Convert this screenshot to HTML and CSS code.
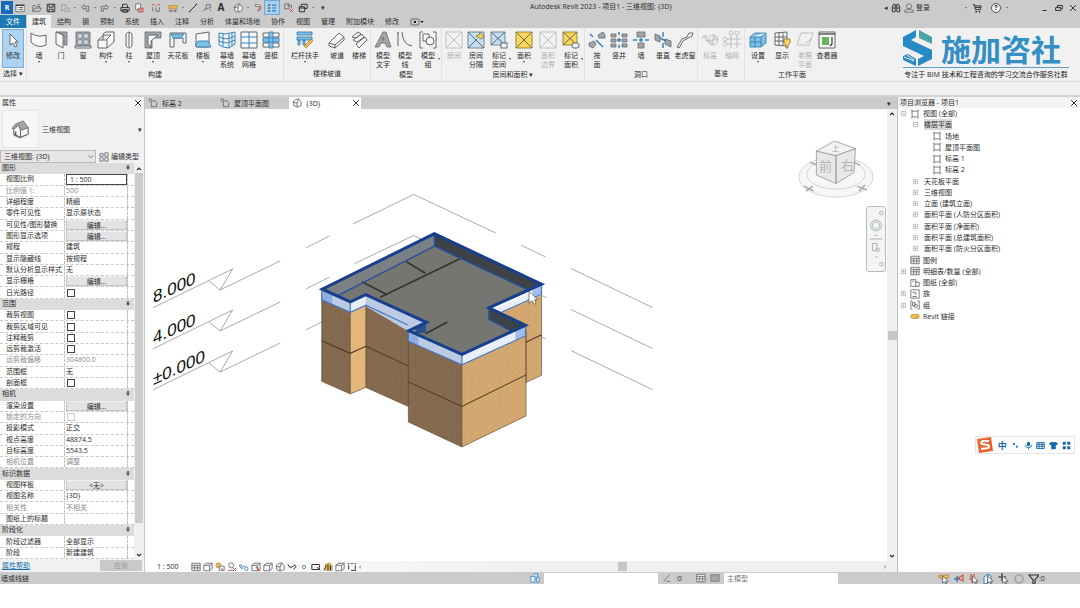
FILE: index.html
```html
<!DOCTYPE html>
<html lang="zh-CN">
<head>
<meta charset="utf-8">
<title>Autodesk Revit 2023 - 项目1</title>
<link rel="stylesheet" href="styles.css">
</head>
<body>
<svg class="defs" aria-hidden="true">
  <defs>
    <symbol id="i-page" viewBox="0 0 12 12"><path class="o" d="M1.500 4.500V1.500H5M4 3.500H8.500L10.500 5.500V10.500H4Z"/></symbol>
    <symbol id="i-house" viewBox="0 0 12 12"><path class="o w" d="M1 5L4 2L8 1L11 5V9L6 11L2 9V5M1 5L6 6L8 1M6 6V11"/></symbol>
    <symbol id="i-dim" viewBox="0 0 12 12"><path class="gold" d="M1 3H11V7H1Z"/><path class="o" d="M1 9.500H11M3 8V11M9 8V11"/></symbol>
    <symbol id="i-cube" viewBox="0 0 12 12"><path class="o w" d="M1 4L4 1.500H11V8L8 10.500H1ZM1 4H8L11 1.500M8 4V10.500"/></symbol>
    <symbol id="i-x" viewBox="0 0 12 12"><path class="k" d="M2.500 2.500L9.500 9.500M9.500 2.500L2.500 9.500"/></symbol>
    <symbol id="i-room" viewBox="0 0 18 18"><path class="o w" d="M1 1H17V17H1Z"/><path class="o" d="M1 1L17 17M17 1L1 17"/></symbol>
    <symbol id="i-area" viewBox="0 0 18 18"><path class="yel" d="M1 1H17V17H1Z"/><path class="o" d="M1 1L17 17M17 1L1 17"/></symbol>
    <symbol id="i-sheet" viewBox="0 0 12 12"><path class="o" d="M2.500 2.500H9.500V9.500H2.500ZM1 1.500H3M9 1.500H11M1 10.500H3M9 10.500H11"/></symbol>
    <symbol id="i-plus" viewBox="0 0 8 8"><path class="t" d="M1.500 1.500H6.500V6.500H1.500ZM2.500 4H5.500M4 2.500V5.500"/></symbol>
    <symbol id="i-minus" viewBox="0 0 8 8"><path class="t" d="M1.500 1.500H6.500V6.500H1.500ZM2.500 4H5.500"/></symbol>
    <symbol id="i-list" viewBox="0 0 12 12"><path class="o w" d="M1 1.500H11V10.500H1Z"/><path class="o" d="M1 4H11M1 7H11M4.500 4V10M8 4V10"/></symbol>
    <symbol id="i-cursor" viewBox="0 0 12 12"><path class="o w" d="M5 3V11L7 9.500L8.500 12L9.500 11.500L8.500 9H11Z"/></symbol>
  </defs>
</svg>
<div class="app">
  <header class="top">
    <div class="titlebar">
      <div class="qat">
        <button class="logo" aria-label="Revit">R</button>
        <button aria-label="主页"><svg viewBox="0 0 12 12"><path class="o w" d="M1 2H11V10.500H1Z"/><path class="k" d="M1 3H11M3 5.500H4M5.500 5.500H9M3 8H4M5.500 8H9"/></svg></button>
        <button class="gap" aria-label="打开"><svg viewBox="0 0 12 12"><path class="o" d="M1 10V3H4L5 4H9V6M1 10L3.500 6H11.500L9 10ZM7 2H10"/></svg></button>
        <button aria-label="保存"><svg viewBox="0 0 12 12"><path class="k" d="M1.500 1.500H10.500V10.500H1.500ZM3.500 1.500V5H8.500V1.500M3.500 10.500V7.500H8.500V10.500"/></svg></button>
        <button aria-label="同步"><svg class="dim" viewBox="0 0 12 12"><path class="o" d="M2 2H7V5M2 2V9H5M6 6H11V10.500H6Z"/></svg></button>
        <span class="dot">·</span>
        <button aria-label="放弃"><svg viewBox="0 0 12 12"><path class="o" d="M5 2L1.500 5L5 8V6.500H8V10H10.500V4H5Z"/></svg></button>
        <span class="dot">·</span>
        <button aria-label="重做"><svg viewBox="0 0 12 12"><path class="o" d="M7 2L10.500 5L7 8V6.500H4V10H1.500V4H7Z"/></svg></button>
        <span class="dot">·</span>
        <button aria-label="打印"><svg viewBox="0 0 12 12"><path class="k" d="M3 5V1.500H8L9 2.500V5M1 5.500H11V9.500H1ZM3 8H9V11H3Z"/></svg></button>
        <button aria-label="PDF"><svg viewBox="0 0 12 12"><path class="o w" d="M2 1H8V8H2Z"/><path class="red" d="M5 6H11V11H5Z"/></svg></button>
        <button class="gap" aria-label="测量"><svg viewBox="0 0 12 12"><path class="r" d="M1 2H4M8 2H11M5 5L7 3"/><path class="o" d="M2 5V10M6 6V10H10V5"/></svg></button>
        <button class="gap" aria-label="对齐尺寸标注"><svg><use href="#i-dim"/></svg></button>
        <span class="dot">·</span>
        <button aria-label="详图线"><svg viewBox="0 0 12 12"><path class="k" d="M2 10L10 2M1 10.500H3M9 1.500H11"/></svg></button>
        <button aria-label="标记"><svg viewBox="0 0 12 12"><path class="o" d="M1 10L5 6M5 2H10V6H7L5 8ZM10 8V10"/></svg></button>
        <button class="bold" aria-label="文字">A</button>
        <button class="gap" aria-label="三维视图"><svg><use href="#i-house"/></svg></button>
        <span class="dot">·</span>
        <button aria-label="剖面"><svg viewBox="0 0 12 12"><path class="o w" d="M3 2H7L10 6L6 10V8L8 6L6 4H3Z"/><path class="r" d="M8 3V9"/></svg></button>
        <button class="on" aria-label="细线"><svg viewBox="0 0 12 12"><path class="k" d="M1 2.500H4M1 6H4M1 9.500H4"/><path class="b" d="M6 2.500H11M6 6H11M6 9.500H11"/></svg></button>
        <button class="gap" aria-label="关闭非活动视图"><svg viewBox="0 0 12 12"><path class="o" d="M1 1H6V7H1ZM4 3H9V6"/><path class="r" d="M7 7L11 11M11 7L7 11"/></svg></button>
        <button aria-label="切换窗口"><svg viewBox="0 0 12 12"><path class="k" d="M4 4V1.500H11V6.500H8M1.500 4.500H8V10.500H1.500ZM1.500 6H8"/></svg></button>
        <span class="dot">·</span>
        <button aria-label="自定义">▾</button>
      </div>
      <div class="title">Autodesk Revit 2023 - 项目1 - 三维视图: {3D}</div>
      <div class="account">
        <span>◂</span>
        <button aria-label="搜索"><svg viewBox="0 0 12 12"><path class="k" d="M1.500 5L3 1.500H5V10.500H1.500ZM7 1.500H9L10.500 5V10.500H7ZM5 4H7M1.500 6H5M7 6H10.500"/></svg></button>
        <button class="login"><svg viewBox="0 0 12 12"><circle class="o" cx="6" cy="4" r="3"/><path class="o" d="M1 11V9L4 7.500H8L11 9V11Z"/></svg>登录</button>
        <span class="dot push">·</span>
        <button class="gap" aria-label="应用商店"><svg viewBox="0 0 12 12"><path class="k" d="M1 2H3L4 8H10L11 3.500H3.500M4 5.500H10.500"/><circle cx="5" cy="10.500" r="1"/><circle cx="9" cy="10.500" r="1"/></svg></button>
        <button class="help" aria-label="帮助">?</button>
        <span class="dot">·</span>
      </div>
      <div class="winbtns">
        <button aria-label="最小化"><svg viewBox="0 0 12 12"><path class="k" d="M3 9H8"/></svg></button>
        <button aria-label="还原"><svg viewBox="0 0 12 12"><path class="k" d="M4 5V3H10V7H8M2 5.500H8V9H2Z"/></svg></button>
        <button aria-label="关闭"><svg><use href="#i-x"/></svg></button>
      </div>
    </div>
    <nav class="tabs">
      <button class="file">文件</button><button class="active">建筑</button><button>结构</button><button>钢</button><button>预制</button><button>系统</button><button>插入</button><button>注释</button><button>分析</button><button>体量和场地</button><button>协作</button><button>视图</button><button>管理</button><button>附加模块</button><button>修改</button><button aria-label="显示选项"><svg class="pill" viewBox="0 0 14 8"><rect class="o" x="1" y="1" width="8" height="6" rx="1"/><path d="M4 3H6V5H4ZM10.500 3H13.500L12 5Z"/></svg></button>
    </nav>
  </header>

  <div class="ribbon">
    <section class="group select"><div class="tools">
      <button class="tool on"><svg viewBox="0 0 18 18"><path class="o w" d="M6 3V14L9 12L11 16L13 15L11 11H14Z"/></svg>修改</button>
    </div><h2>选择 ▾</h2></section>
    <section class="group build"><div class="tools">
      <button class="tool arrow"><svg viewBox="0 0 18 18"><path class="o w" d="M1 2Q8 7 16 4V14Q8 18 1 11Z"/></svg>墙</button>
      <button class="tool"><svg viewBox="0 0 18 18"><path class="gr" d="M4 1H15V14H12V4Z"/><path class="o w" d="M4 1L11 4V17L4 13Z"/></svg>门</button>
      <button class="tool"><svg viewBox="0 0 18 18"><path class="gr" d="M2 1H16V15H2Z"/><path class="pale" d="M4 3H8V7H4ZM10 3H14V7H10ZM4 9H8V13H4ZM10 9H14V13H10Z"/><path class="o w" d="M1 15H17V17H1Z"/></svg>窗</button>
      <button class="tool arrow w24"><svg viewBox="0 0 18 18"><path class="o w" d="M1 9L6 5V3L9 1H17V11L10 17H1ZM6 5L9 4H14L10 8V17M1 9H9M6 5V9"/></svg>构件</button>
      <button class="tool arrow"><svg viewBox="0 0 18 18"><path class="o w" d="M6 3Q9 -1 12 3V15Q9 19 6 15ZM9 1V16"/></svg>柱</button>
      <button class="tool arrow w26"><svg viewBox="0 0 18 18"><path class="gr" d="M1 1H17V7H8V17H1Z"/><path class="o w" d="M4 4H14L7 10V17L4 13Z"/></svg>屋顶</button>
      <button class="tool w24"><svg viewBox="0 0 18 18"><path class="o w" d="M1 2H17V12H14V7H5V16H1Z"/><path class="blue" d="M2 3H15L12 7H4Z"/></svg>天花板</button>
      <button class="tool arrow w26"><svg viewBox="0 0 18 18"><path class="o w" d="M2 3L15 1V16H2Z"/><path class="blue" d="M1 14L4 10H14L17 16H4Z"/></svg>楼板</button>
      <button class="tool"><svg viewBox="0 0 18 18"><path class="bl" d="M1 2Q8 4 12 2L17 1V13L11 17Q6 17 1 14ZM1 6Q8 9 12 7L17 5M1 10Q8 13 12 11L17 9M5 3V15M11 3V17M14 2V15"/></svg>幕墙<br>系统</button>
      <button class="tool"><svg viewBox="0 0 18 18"><path class="o w" d="M1 1H17V17H1Z"/><path class="bl" d="M9 1V17M1 6H17M1 12H17"/></svg>幕墙<br>网格</button>
      <button class="tool"><svg viewBox="0 0 18 18"><path class="o w" d="M1 2H17V6H1ZM1 12H17V16H1Z"/><path class="blue" d="M7 1H11V17H7ZM1 7H17V11H1Z"/></svg>竖梃</button>
    </div><h2>构建</h2></section>
    <section class="group stair"><div class="tools">
      <button class="tool arrow w42"><svg viewBox="0 0 18 18"><path class="blue" d="M1 1H16V4H1ZM1 6H16V9H1ZM2 9H4V14H2ZM7 9H9V14H7Z"/><path class="gold" d="M8 15L15 8L17 10L10 17Z"/></svg>栏杆扶手</button>
      <button class="tool"><svg viewBox="0 0 18 18"><path class="o w" d="M1 12L11 2L16 6V9L7 17L1 15ZM1 12L7 14L16 6M7 14V17"/></svg>坡道</button>
      <button class="tool"><svg viewBox="0 0 18 18"><path class="o w" d="M2 6L8 1L11 3L6 7ZM3 9L12 3L14 6L7 11ZM6 13L15 6L17 9L9 17Z"/></svg>楼梯</button>
    </div><h2>楼梯坡道</h2></section>
    <section class="group model"><div class="tools">
      <button class="tool"><svg viewBox="0 0 18 18"><path class="gr" d="M1 16L9 1H12L17 16H13L11 12H7L5 16ZM8 9H10L9 6Z"/></svg>模型<br>文字</button>
      <button class="tool"><svg viewBox="0 0 18 18"><path class="o" d="M2 1V13M6 1Q7 14 16 15M1 2H3M1 14H3"/></svg>模型<br>线</button>
      <button class="tool side w24"><svg viewBox="0 0 18 18"><path class="o w" d="M4 1H1V17H4M14 1H17V17H14M4 3H10V10H4Z"/><circle class="o w" cx="11" cy="10" r="4"/></svg>模型<br>组</button>
    </div><h2>模型</h2></section>
    <section class="group room"><div class="tools">
      <button class="tool" disabled><svg><use href="#i-room"/></svg>房间</button>
      <button class="tool"><svg viewBox="0 0 18 18"><path class="sky" d="M1 1H17V17H1Z"/><path class="o" d="M1 1L17 17M1 17L10 8"/><path class="yel" d="M9 5L12 4L13 1L15 4L17 6L14 8Z"/></svg>房间<br>分隔</button>
      <button class="tool side w24"><svg viewBox="0 0 18 18"><path class="sky" d="M1 1H15V14H1Z"/><path class="o" d="M1 1L15 14M15 1L1 14"/><rect class="o w" x="11" y="12" width="6" height="5"/></svg>标记<br>房间</button>
      <button class="tool arrow w26"><svg><use href="#i-area"/></svg>面积</button>
      <button class="tool" disabled><svg><use href="#i-room"/></svg>面积<br>边界</button>
      <button class="tool side w24"><svg viewBox="0 0 18 18"><path class="yel" d="M1 1H15V14H1Z"/><path class="o" d="M1 1L15 14M15 1L1 14"/><rect class="o w" x="10" y="12" width="7" height="5" rx="2"/></svg>标记<br>面积</button>
    </div><h2>房间和面积 ▾</h2></section>
    <section class="group open"><div class="tools">
      <button class="tool"><svg viewBox="0 0 18 18"><path class="gr" d="M10 4L15 1L17 4V7H11ZM1 12L6 10L8 13L5 17L1 15Z"/><path class="b" d="M2 3L5 6M8 9L15 16"/></svg>按<br>面</button>
      <button class="tool"><svg viewBox="0 0 18 18"><path class="gr" d="M1 3H6V6H1ZM12 3H17V6H12ZM1 8H6V11H1ZM12 8H17V11H12ZM1 13H6V16H1ZM12 13H17V16H12Z"/><path class="b" d="M9 1V4M9 14V17M7 9H11M9 7V11"/></svg>竖井</button>
      <button class="tool"><svg viewBox="0 0 18 18"><path class="gr" d="M5 1H13V6H5ZM6 12H12V17H6Z"/><path class="b" d="M1 9H5M13 9H17M9 7V11M7 9H11"/></svg>墙</button>
      <button class="tool"><svg viewBox="0 0 18 18"><path class="gr" d="M1 3L6 5V11L1 9ZM11 8L17 10V16L11 13Z"/><path class="b" d="M9 1V6M9 12V17M6 7L12 10"/></svg>垂直</button>
      <button class="tool"><svg viewBox="0 0 18 18"><path class="o w" d="M1 16L6 8L11 6L13 2H17L16 5L12 7L7 10L3 17Z"/></svg>老虎窗</button>
    </div><h2>洞口</h2></section>
    <section class="group datum"><div class="tools">
      <button class="tool" disabled><svg viewBox="0 0 18 18"><path class="o" d="M1 8L3 4L5 8M5 4V10H8"/><circle class="o" cx="12" cy="9" r="5"/><path class="gr" d="M12 4A5 5 0 0 1 17 9H12ZM12 9V14A5 5 0 0 1 7 9Z"/></svg>标高</button>
      <button class="tool" disabled><svg viewBox="0 0 18 18"><path class="o" d="M8 4V17M14 4V17M4 8H18M4 13H18"/><circle class="o" cx="8" cy="2" r="2"/><circle class="o" cx="14" cy="2" r="2"/><circle class="o" cx="2" cy="8" r="2"/><circle class="o" cx="2" cy="13" r="2"/></svg>轴网</button>
    </div><h2>基准</h2></section>
    <section class="group plane"><div class="tools">
      <button class="tool arrow w24"><svg viewBox="0 0 18 18"><path class="blue" d="M1 6L6 2H17V12L12 16H1Z"/><path class="bl" d="M1 6H12L17 2M12 6V16M1 11H12M6 6V16"/></svg>设置</button>
      <button class="tool w24"><svg viewBox="0 0 18 18"><path class="o w" d="M2 2L14 1V15L2 14Z"/><path class="o" d="M6 2V14M10 2V14M2 6H14M2 10H14"/><path class="yel" d="M11 8H17V12L15 14V17H13V14L11 12Z"/></svg>显示</button>
      <button class="tool" disabled><svg viewBox="0 0 18 18"><path class="o" d="M5 2H17L13 14H1ZM10 12L16 7"/></svg>参照<br>平面</button>
      <button class="tool"><svg viewBox="0 0 18 18"><path class="o w" d="M1 1H17V17H1Z"/><path class="k" d="M1 3H17"/><path class="green" d="M4 6H11V14H4Z"/><path class="k" d="M14 6V13L12 15"/></svg>查看器</button>
    </div><h2>工作平面</h2></section>
    <div class="brand">
      <div class="brand-main">
        <svg viewBox="0 0 30 36"><path class="brand-blue" d="M13 0L0 7V16L21 26L15 29V36L29 29V20L8 10L13 7Z"/><path class="brand-green" d="M16 0L29 7V14L16 8Z"/><path class="brand-blue" d="M0 26L5 24L13 29V36L0 30Z"/><path class="slit" d="M1 27L11 31M4 25L11 30"/></svg>
        <strong>施加咨社</strong>
      </div>
      <p>专注于 BIM 技术和工程咨询的学习交流合作服务社群</p>
    </div>
  </div>
  <div class="options"></div>

  <main class="work">
    <aside class="props">
      <div class="panel-title"><span>属性</span><button aria-label="关闭属性"><svg><use href="#i-x"/></svg></button></div>
      <button class="type"><span class="thumb"><svg viewBox="0 0 20 20"><path class="gr" d="M1 9L5 4L13 1L18 8V15L9 19L3 16V10Z"/><path class="o w" d="M3 10L8 5L10 11V18L3 15ZM10 11L18 8V15L10 18Z"/><path class="k" d="M5 12V16"/></svg></span><span>三维视图</span><i>▾</i></button>
      <div class="filter">
        <select aria-label="视图"><option>三维视图: {3D}</option></select>
        <svg class="chev" viewBox="0 0 8 8"><path class="o" d="M1 2.500L4 5.500L7 2.500"/></svg>
        <button><svg viewBox="0 0 12 12"><path class="o" d="M1 5V2H5V5ZM7 5V1H11V5ZM1 7H5V11H1ZM7 7H11V11H7Z"/></svg>编辑类型</button>
      </div>
      <div class="grid-wrap">
        <table>
          <tbody>
            <tr class="head"><th colspan="3">图形<i>⇞</i></th></tr>
            <tr><th><label for="p1">视图比例</label></th><td><input id="p1" type="text" value="1 : 500"></td><td></td></tr>
            <tr class="off"><th>比例值 1:</th><td>500</td><td></td></tr>
            <tr><th>详细程度</th><td>精细</td><td></td></tr>
            <tr><th>零件可见性</th><td>显示原状态</td><td></td></tr>
            <tr><th>可见性/图形替换</th><td><button>编辑...</button></td><td></td></tr>
            <tr><th>图形显示选项</th><td><button>编辑...</button></td><td></td></tr>
            <tr><th>规程</th><td>建筑</td><td></td></tr>
            <tr><th>显示隐藏线</th><td>按规程</td><td></td></tr>
            <tr><th>默认分析显示样式</th><td>无</td><td></td></tr>
            <tr><th>显示栅格</th><td><button>编辑...</button></td><td></td></tr>
            <tr><th><label for="c1">日光路径</label></th><td><input id="c1" type="checkbox"></td><td></td></tr>
            <tr class="head"><th colspan="3">范围<i>⇞</i></th></tr>
            <tr><th><label for="c2">裁剪视图</label></th><td><input id="c2" type="checkbox"></td><td></td></tr>
            <tr><th><label for="c3">裁剪区域可见</label></th><td><input id="c3" type="checkbox"></td><td></td></tr>
            <tr><th><label for="c4">注释裁剪</label></th><td><input id="c4" type="checkbox"></td><td></td></tr>
            <tr><th><label for="c5">远剪裁激活</label></th><td><input id="c5" type="checkbox"></td><td></td></tr>
            <tr class="off"><th>远剪裁偏移</th><td>304800.0</td><td></td></tr>
            <tr><th>范围框</th><td>无</td><td></td></tr>
            <tr><th><label for="c6">剖面框</label></th><td><input id="c6" type="checkbox"></td><td></td></tr>
            <tr class="head"><th colspan="3">相机<i>⇞</i></th></tr>
            <tr><th>渲染设置</th><td><button>编辑...</button></td><td></td></tr>
            <tr class="off"><th><label for="c7">锁定的方向</label></th><td><input id="c7" type="checkbox" disabled></td><td></td></tr>
            <tr><th>投影模式</th><td>正交</td><td></td></tr>
            <tr><th>视点高度</th><td>48874.5</td><td></td></tr>
            <tr><th>目标高度</th><td>5543.5</td><td></td></tr>
            <tr class="off"><th>相机位置</th><td>调整</td><td></td></tr>
            <tr class="head"><th colspan="3">标识数据<i>⇞</i></th></tr>
            <tr><th>视图样板</th><td><button>&lt;无&gt;</button></td><td></td></tr>
            <tr><th>视图名称</th><td>{3D}</td><td></td></tr>
            <tr class="off"><th>相关性</th><td>不相关</td><td></td></tr>
            <tr><th>图纸上的标题</th><td></td><td></td></tr>
            <tr class="head"><th colspan="3">阶段化<i>⇞</i></th></tr>
            <tr><th>阶段过滤器</th><td>全部显示</td><td></td></tr>
            <tr><th>阶段</th><td>新建建筑</td><td></td></tr>
          </tbody>
        </table>
        <div class="vbar"><svg viewBox="0 0 8 8"><path class="k" d="M2 5L4 3L6 5"/></svg><div class="fill"></div><svg viewBox="0 0 8 8"><path class="k" d="M2 3L4 5L6 3"/></svg></div>
      </div>
      <div class="apply"><a href="#help">属性帮助</a><button disabled>应用</button></div>
    </aside>

    <section class="view">
      <div class="view-tabs">
        <button><svg><use href="#i-page"/></svg>标高 2</button>
        <button><svg><use href="#i-page"/></svg>屋顶平面图</button>
        <button class="active"><svg><use href="#i-house"/></svg>{3D}<svg class="end"><use href="#i-x"/></svg></button>
        <button class="more" aria-label="更多视图">▾</button>
      </div>
      <div class="stage">
        <svg class="drawing" viewBox="145 109 741 451" preserveAspectRatio="xMinYMin meet">
          <defs>
            <g id="level"><path d="M153 307.500L232.500 268.700L220 289.700L209 280.700M220 289.700L280 260.700"/></g>
            <g id="datum-lines"><path d="M306 247.500L329 236M570.500 268.300L652 307.300"/></g>
            <pattern id="grain-dark" width="7" height="7" patternUnits="userSpaceOnUse"><rect width="7" height="7" fill="#846a4f"/><path d="M1 1h1v1h-1zM4 3h1v1h-1zM2 5h1v1h-1z" fill="#7a6048"/><path d="M5 0h1v1h-1zM0 4h1v1h-1z" fill="#8d7257"/></pattern>
            <pattern id="grain-light" width="7" height="7" patternUnits="userSpaceOnUse"><rect width="7" height="7" fill="#d3a770"/><path d="M1 1h1v1h-1zM4 3h1v1h-1zM2 5h1v1h-1z" fill="#c79b63"/><path d="M5 0h1v1h-1zM0 4h1v1h-1z" fill="#dcb27c"/></pattern>
          </defs>
          <g class="thin">
            <use href="#level"/><use href="#level" y="41"/><use href="#level" y="82"/>
            <use href="#datum-lines"/><use href="#datum-lines" y="41"/><use href="#datum-lines" y="82"/>
            <path d="M353 223.700L413.300 194.300L495 232.700M354 263.500L413.300 235.300L422 239.500M520.500 245L545 256.700M535 292.500L546 297.500M535 333.500L545 338.500"/>
          </g>
          <g class="level-text">
            <text transform="translate(153 303) skewY(-25)">8.000</text>
            <text transform="translate(153 344) skewY(-25)">4.000</text>
            <text transform="translate(153 385) skewY(-25)">±0.000</text>
          </g>
          <g class="walls">
            <path fill="url(#grain-dark)" d="M321.500 296L350 308V393.500L321.500 381ZM365.500 300L408 322V406L365.500 387ZM408 336L461.500 360V446.500L408 421.500Z"/>
            <path fill="#e3b67a" d="M350 308L365.500 300V387L350 393.500Z"/>
            <path fill="url(#grain-light)" d="M461.500 360L525.500 332V415.500L461.500 446.500ZM495 310L541 290V375L525.500 382V330Z"/>
            <path class="mid" d="M321.500 340.500L350 353L365.500 346L408 365.500M408 381.500L461.500 406L525.500 374.500M525.500 342L541 334.500"/>
          </g>
          <path fill="#757672" d="M434 233L321.500 288.500L350 301L365.500 294L426 321.500L408 330L461.500 353.500L525 324.500L488.500 307L541 283.500Z"/>
          <path fill="#7a8084" d="M434 234L324 288.500L337 295L434 246Z"/>
          <path fill="#3d4247" d="M434 234L538 283.500L526 289L434 246Z"/>
          <path fill="#3b424a" d="M488.500 307L525 324.500L511 331L488.500 319Z"/>
          <path class="partition" d="M380 297L460 258.300M406 261.500L425 273M361.500 281.500L387 294.500M425 333.500L447 321.700"/>
          <g class="parapet">
            <path fill="#bccbe4" d="M321.500 288.500L350 301V312L321.500 299.500ZM365.500 294L426 321.500V329L408 331L365.500 306ZM408 330L461.500 353.500V364.500L408 341Z"/>
            <path fill="#e9eff8" d="M350 301L365.500 294V305L350 312ZM461.500 353.500L525 324.500V335.500L461.500 364.500ZM493 309L541 287V295L501 312Z"/>
            <path fill="#6f9ae0" d="M321.500 288.500L332 293V304L321.500 300ZM408 330L418 334V345L408 341ZM515 329L525 324.500V335L515 339.500ZM532 287L541 283.500V294L532 298Z" opacity=".6"/>
            <path fill="#2b4f86" d="M414 327L426 321.500V332L416 333.500Z"/>
          </g>
          <path class="edge" d="M434 246L337 295.500M434 246L526 289M434 233V246M488.500 307V319L511 331"/>
          <path class="edge soft" d="M321.500 299.500L350 312L365.500 305L408 325M408 341L461.500 364.500L525 335.500M501 312L541 294M426 321.500V332M321.500 288.500V300M350 301V312M408 330V341M461.500 353.500V364.500M525 324.500V335.500M541 283.500V294"/>
          <path class="rim" d="M434 233.500L322 289L350 301.500L365.500 294.500L426 322L408.500 330.500L461.500 354L525 325L488.500 307.500L541 284Z"/>
          <path class="pointer" d="M528.500 291V303L531.500 300.500L534 304L535.500 303L534 299.500H537Z"/>
          <g class="viewcube">
            <ellipse cx="835" cy="177" rx="37" ry="20"/><ellipse cx="835" cy="174" rx="29" ry="15"/>
            <path class="tick" d="M803 186L813 191M805 191L812 186M856 186L866 190M858 191L864 185M809 162L816 165M852 162L859 165"/>
            <path class="side" d="M815.500 151L835 155.500V183.500L815.500 175ZM835 155.500L854.500 148.500L853 172.500L835 183.500Z"/>
            <path class="roof" d="M833.500 141L815.500 151L835 155.500L854.500 148.500Z"/>
            <text x="818" y="171">前</text><text x="840" y="170">右</text><text class="small" x="831" y="151">上</text>
          </g>
        </svg>
        <div class="navbar">
          <svg viewBox="0 0 20 66"><circle cx="16" cy="4" r="2"/><circle cx="10" cy="18" r="6"/><circle class="teal" cx="10" cy="18" r="4"/><path d="M9 29H12M3 33H17M6 38H11V46H6ZM9 53H12"/><circle cx="12" cy="45" r="2"/><circle cx="16" cy="61" r="2"/></svg>
        </div>
        <div class="scroll-v"><svg viewBox="0 0 8 8"><path class="k" d="M2 5L4 3L6 5"/></svg><div class="knob"></div><svg viewBox="0 0 8 8"><path class="k" d="M2 3L4 5L6 3"/></svg></div>
      </div>
      <div class="view-bar">
        <span class="scale">1 : 500</span>
        <button aria-label="详细程度"><svg><use href="#i-list"/></svg></button>
        <button class="c-blue" aria-label="视觉样式"><svg><use href="#i-cube"/></svg></button>
        <button aria-label="日光路径"><svg viewBox="0 0 12 12"><circle class="gold" cx="4" cy="4" r="3"/><path class="o w" d="M5 5H11V10H5Z"/><path class="r" d="M7 7L10 10"/></svg></button>
        <button aria-label="阴影"><svg viewBox="0 0 12 12"><circle class="o w" cx="5" cy="4" r="3"/><path class="o" d="M1 10H7"/><path class="r" d="M7 7L11 11M11 7L7 11"/></svg></button>
        <button aria-label="渲染"><svg viewBox="0 0 12 12"><path class="bl" d="M1 3L4 5V8L1 6ZM5 4L8 7M6 8L9 5L11 8L9 11Z"/></svg></button>
        <button class="c-blue" aria-label="裁剪视图"><svg><use href="#i-cube"/><path class="r" d="M5 5L9 9"/></svg></button>
        <button class="c-blue" aria-label="显示裁剪区域"><svg><use href="#i-cube"/></svg></button>
        <button aria-label="锁定视图"><svg><use href="#i-house"/></svg></button>
        <button aria-label="临时隐藏"><svg viewBox="0 0 12 12"><path class="k" d="M1 3Q3 8 6 6Q9 2 11 5L8 9"/></svg></button>
        <button aria-label="显示隐藏图元"><svg viewBox="0 0 12 12"><circle class="bl" cx="6" cy="6" r="2"/></svg></button>
        <button aria-label="临时视图属性"><svg viewBox="0 0 12 12"><path class="k" d="M1 3H10V9H1ZM7 6L11 10"/></svg></button>
        <button aria-label="分析模型"><svg viewBox="0 0 12 12"><path class="gold" d="M3 3L8 1L11 5V10H3Z"/><path class="k" d="M1 10L4 4M6 3V10M9 4V10"/></svg></button>
        <button aria-label="位移集"><svg><use href="#i-cube"/></svg></button>
        <button aria-label="约束"><svg viewBox="0 0 12 12"><path class="k" d="M1 2H3M5 2H7M9 2H11M2 4V9M10 4V9M5 10H11"/></svg></button>
        <span>‹</span>
        <div class="track"><div class="knob"></div></div>
        <span class="right">›</span>
      </div>
    </section>

    <aside class="browser">
      <div class="panel-title"><span>项目浏览器 - 项目1</span><button aria-label="关闭项目浏览器"><svg><use href="#i-x"/></svg></button></div>
      <ul class="tree">
        <li><svg><use href="#i-minus"/></svg><svg class="ico"><use href="#i-sheet"/></svg>视图 (全部)</li>
        <li class="l1"><svg><use href="#i-minus"/></svg><span class="sel">楼层平面</span></li>
        <li class="l2"><svg class="ico"><use href="#i-sheet"/></svg>场地</li>
        <li class="l2"><svg class="ico"><use href="#i-sheet"/></svg>屋顶平面图</li>
        <li class="l2"><svg class="ico"><use href="#i-sheet"/></svg>标高 1</li>
        <li class="l2"><svg class="ico"><use href="#i-sheet"/></svg>标高 2</li>
        <li class="l1"><svg><use href="#i-plus"/></svg><span>天花板平面</span></li>
        <li class="l1"><svg><use href="#i-plus"/></svg><span>三维视图</span></li>
        <li class="l1"><svg><use href="#i-plus"/></svg><span>立面 (建筑立面)</span></li>
        <li class="l1"><svg><use href="#i-plus"/></svg><span>面积平面 (人防分区面积)</span></li>
        <li class="l1"><svg><use href="#i-plus"/></svg><span>面积平面 (净面积)</span></li>
        <li class="l1"><svg><use href="#i-plus"/></svg><span>面积平面 (总建筑面积)</span></li>
        <li class="l1"><svg><use href="#i-plus"/></svg><span>面积平面 (防火分区面积)</span></li>
        <li class="leaf"><svg class="ico"><use href="#i-list"/></svg>图例</li>
        <li><svg><use href="#i-plus"/></svg><svg class="ico"><use href="#i-list"/></svg>明细表/数量 (全部)</li>
        <li class="leaf"><svg class="ico" viewBox="0 0 12 12"><path class="o" d="M1 2H7V10H1ZM3 4H5M6 5H11V10H7"/></svg>图纸 (全部)</li>
        <li><svg><use href="#i-plus"/></svg><svg class="ico" viewBox="0 0 12 12"><path class="o" d="M1 1H11V11H1ZM3 4H7V7M3 9H8"/></svg>族</li>
        <li><svg><use href="#i-plus"/></svg><svg class="ico" viewBox="0 0 12 12"><path class="o" d="M3 1H1V11H3M9 1H11V11H9M3 3H6V7H3Z"/><circle class="o" cx="7" cy="7" r="2"/></svg>组</li>
        <li class="leaf"><svg class="ico" viewBox="0 0 12 12"><rect class="gold" x="1" y="4" width="10" height="5" rx="2"/></svg>Revit 链接</li>
      </ul>
    </aside>
  </main>

  <footer class="status">
    <span class="hint">墙或线链</span>
    <div class="sets">
      <svg viewBox="0 0 12 12"><path class="bl" d="M1 4H6V11H1ZM4 1H9V5M8 5H11V11H8Z"/></svg>
      <select class="combo" aria-label="工作集"><option></option></select>
      <svg viewBox="0 0 12 12"><path class="o" d="M2 10L9 2M5 10H10"/></svg><span class="count">:0</span>
      <svg><use href="#i-list"/></svg><svg viewBox="0 0 12 12"><path class="gr" d="M1 2H11V10H1Z"/></svg>
      <select class="combo" aria-label="设计选项"><option>主模型</option></select>
    </div>
    <div class="picks">
      <button aria-label="选择链接"><svg><path class="gold" d="M1 2H11V5H8V8H5V5H1Z"/><use href="#i-cursor"/></svg></button>
      <button aria-label="选择基线图元"><svg><path class="b" d="M1 6H7M4 3V9"/><path class="r" d="M5 5L10 2V8Z"/></svg></button>
      <button aria-label="选择锁定图元"><svg><path class="r" d="M3 1V6M6 1V6M1 6H8M4 6V10"/><use href="#i-cursor"/></svg></button>
      <button aria-label="按面选择"><svg><path class="bl" d="M1 4L5 1V10L1 11ZM5 1L8 3V9"/><use href="#i-cursor"/></svg></button>
      <button aria-label="拖拽图元"><svg><path class="k" d="M4 0V8M0 4H8"/><use href="#i-cursor"/></svg></button>
      <button aria-label="后台进程"><svg><circle class="ring" cx="6" cy="6" r="4"/></svg></button>
      <button aria-label="过滤器"><svg><path class="k" d="M1 2H11L7 7V11H5V7Z"/></svg>:0</button>
    </div>
  </footer>
</div>
<div class="ime">
  <svg class="sogou" viewBox="0 0 18 18"><path class="orange" d="M1 3L15 1L17 15L3 17Z"/><path class="s" d="M13 5L7 5Q4 6 6 8L12 9Q14 11 12 12L5 13"/></svg>
  <button class="zh">中</button>
  <button aria-label="标点"><svg viewBox="0 0 12 12"><circle cx="4" cy="4" r="1.500"/><path d="M7 6H9V8L7 10Z"/></svg></button>
  <button aria-label="语音"><svg viewBox="0 0 12 12"><rect x="4" y="1" width="4" height="6" rx="2"/><path class="ln" d="M2 5Q2 9 6 9Q10 9 10 5M6 9V11"/></svg></button>
  <button aria-label="键盘"><svg viewBox="0 0 12 12"><path class="ln" d="M1 2H11V10H1ZM1 4.500H11M1 7H11M4 2V10M8 2V10"/></svg></button>
  <button aria-label="皮肤"><svg viewBox="0 0 12 12"><path d="M4 1Q6 3 8 1L12 3L10 6L9 5V11H3V5L2 6L0 3Z"/></svg></button>
  <button aria-label="工具箱"><svg viewBox="0 0 12 12"><path d="M1 1H5V5H1ZM7 1H11V5H7ZM1 7H5V11H1ZM7 7H11V11H7Z"/></svg></button>
</div>
</body>
</html>
```
FILE: styles.css
```css
* { box-sizing: border-box; }
html, body { margin: 0; height: 100%; }
body {
  position: relative;
  padding-bottom: 24px;
  background: #fff;
  color: #2c2c2c;
  font: 7px/11px "Open Sans", "Noto Sans CJK SC", sans-serif;
  overflow: hidden;
}
button, input, select { font: inherit; color: inherit; margin: 0; padding: 0; border: 0; background: none; border-radius: 0; }
button { white-space: nowrap; }
svg { display: block; flex: none; width: 10px; height: 10px; }
i { font-style: normal; }
.defs { position: absolute; width: 0; height: 0; }

/* icon strokes and fills */
.o { fill: none; stroke: #62666a; stroke-width: 1; }
.w { fill: #f7f8f9; }
.k { fill: none; stroke: #333; stroke-width: 1.2; }
.t { fill: none; stroke: #999; stroke-width: .7; }
.r { fill: none; stroke: #d05040; stroke-width: 1.2; }
.b { fill: none; stroke: #2f7fba; stroke-width: 1.4; }
.bl { fill: #eaf4fb; stroke: #3a83b5; stroke-width: 1; }
.gr { fill: #a3a6a9; stroke: #666a6e; stroke-width: .8; fill-rule: evenodd; }
.pale { fill: #cfe2f0; stroke: #777; stroke-width: .5; }
.blue { fill: #7fc0e8; stroke: #2d78ab; stroke-width: .8; }
.sky { fill: #c3def0; stroke: #56707f; stroke-width: .8; }
.yel { fill: #fbd659; stroke: #806c2f; stroke-width: .8; }
.gold { fill: #eab84f; stroke: #9a772b; stroke-width: .6; }
.green { fill: #6db35b; }
.red { fill: #dd8377; stroke: #a34b40; stroke-width: .6; }
.ring { fill: none; stroke: #aaa; stroke-width: 2; }
.c-blue .w, .c-blue svg { color: #3a83b5; }

.app { height: 100%; display: flex; flex-direction: column; }

/* title bar and ribbon tabs */
.top { background: #cbcbcb; flex: none; }
.titlebar { display: flex; height: 15px; align-items: center; }
.qat { display: flex; align-items: center; width: 530px; padding-left: 1px; }
.qat button { width: 14px; height: 13px; display: grid; place-items: center; }
.qat .logo { width: 12px; background: #1769bd; color: #fff; font-weight: 700; }
.qat .gap { margin-left: 3px; }
.qat .bold { font-size: 10px; font-weight: 700; }
.qat .on { background: #a9d0f0; outline: 1px solid #6da7d4; }
.dot { width: 6px; text-align: center; font-weight: 700; }
.dim { opacity: .5; }
.title { flex: 1; line-height: 11px; padding-bottom: 3px; white-space: nowrap; }
.account { display: flex; align-items: center; gap: 3px; width: 128px; }
.account .login { display: flex; align-items: center; gap: 2px; }
.account .push { margin-left: 30px; }
.help { width: 10px; height: 10px; line-height: 8px; border: 1px solid #555; border-radius: 50%; font-weight: 700; background: #f0f4f8; margin-left: 6px; }
.winbtns { display: flex; gap: 4px; padding: 0 2px 0 28px; }
.tabs { display: flex; height: 13px; }
.tabs button { padding: 0 5px; margin-left: 1px; }
.tabs .file { background: #1c7ab5; color: #fff; margin: 0; padding: 0 6px; }
.tabs .active { background: #f3f3f3; }
.pill { width: 14px; height: 8px; }

/* ribbon */
.ribbon { display: flex; flex: none; height: 54px; background: #f1f1f1; border-bottom: 1px solid #d9d9d9; }
.group { border-right: 1px solid #e2e2e2; display: flex; flex-direction: column; padding: 1px; }
.group.select { padding: 1px 2px; }
.group.stair { padding: 1px 0; }
.group.plane { border: 0; }
.group h2 { margin: 0; font: inherit; line-height: 12px; text-align: center; white-space: nowrap; }
.tools { display: flex; height: 41px; }
.tool { position: relative; width: 22px; line-height: 9px; display: flow-root; padding-top: 2px; align-self: stretch; vertical-align: top; display: flex; flex-direction: column; align-items: center; justify-content: flex-start; text-align: center; }
.tool svg { width: 18px; height: 18px; margin-bottom: 2px; }
.w24 { width: 24px; }
.w26 { width: 26px; }
.w42 { width: 42px; }
.tool.on { background: #add3f2; outline: 1px solid #79addb; outline-offset: -1px; }
.tool:disabled { opacity: .35; }
.tool.arrow::after { content: ""; border: 1px solid transparent; border-top: 2px solid #444; margin-top: 1px; }
.tool.side::after { content: ""; position: absolute; right: 0; bottom: 8px; border: 1px solid transparent; border-top: 2px solid #444; }
.brand { margin-left: auto; margin-right: 11px; width: 166px; }
.brand-main { display: flex; align-items: center; gap: 8px; height: 40px; border-bottom: 1px solid #5b9fca; }
.brand-main svg { width: 30px; height: 36px; }
.brand strong { font: 700 30px/36px "Noto Sans CJK SC", sans-serif; color: #348fc5; white-space: nowrap; }
.brand p { margin: 0; line-height: 14px; white-space: nowrap; color: #222; text-align: center; }
.brand-blue { fill: #258bc2; }
.brand-green { fill: #48a5a0; }
.slit { stroke: #f1f1f1; stroke-width: 1; }
.options { flex: none; height: 15px; background: #f0f0f0; border-bottom: 2px solid #d2d2d2; }

/* workspace */
.work { flex: 1; min-height: 0; display: flex; }
.panel-title { flex: none; height: 11px; display: flex; justify-content: space-between; align-items: center; padding: 0 1px 0 2px; background: #f3f3f3; }
.props { width: 145px; display: flex; flex-direction: column; background: #f1f1f1; border-right: 1px solid #c6c6c6; }
.type { height: 42px; display: flex; align-items: center; gap: 3px; padding: 2px; text-align: left; }
.type i { margin-left: auto; }
.thumb { width: 37px; height: 38px; display: grid; place-items: center; background: #f7f7f7; border: 1px solid #e8e8e8; }
.thumb svg { width: 19px; height: 19px; }
.filter { display: flex; align-items: center; height: 13px; position: relative; }
.filter select { appearance: none; width: 96px; height: 13px; padding-left: 3px; background: #e6e6e6; border: 1px solid #bbb; }
.chev { position: absolute; left: 87px; width: 7px; height: 7px; }
.filter button { display: flex; align-items: center; gap: 2px; margin-left: 3px; }
.grid-wrap { flex: 1; min-height: 0; display: flex; }
table { flex: 1; display: block; background: #fff; }
tbody { display: grid; height: 100%; grid-auto-rows: 1fr; }
tr { display: grid; grid-template-columns: 64px 1fr 7px; min-height: 0; border-bottom: 1px dashed #c9c9c9; }
th, td { padding: 0; min-width: 0; min-height: 0; font-weight: 400; text-align: left; white-space: nowrap; display: flex; align-items: center; line-height: 10px; }
th { padding-left: 6px; }
td { border-left: 1px dashed #c0c0c0; padding-left: 1px; }
.head { display: block; background: #dcdcdc; border-color: #dcdcdc; }
.head th { height: 100%; padding: 0 3px 0 2px; justify-content: space-between; }
.off { color: #8b8b8b; }
td button { flex: 1; height: 10px; line-height: 9px; background: #e3e3e3; border: 1px solid #c3c3c3; border-top-color: #eee; }
td input[type="text"] { width: 100%; height: 11px; border: 1px solid #444; padding-left: 3px; }
td input[type="checkbox"] { appearance: none; width: 8px; height: 8px; margin-left: 1px; border: 1px solid #444; background: #fff; }
td input:disabled { border-color: #ccc; }
.vbar { width: 10px; background: #f0f0f0; display: flex; flex-direction: column; align-items: center; padding-top: 2px; }
.vbar svg { width: 8px; height: 8px; }
.vbar .fill { flex: 1; width: 8px; background: #cbcbcb; margin-bottom: 28px; }
.apply { flex: none; height: 13px; display: flex; align-items: center; justify-content: space-between; padding: 0 2px; }
.apply a { color: #1672b0; }
.apply button { width: 42px; height: 11px; background: #c9c9c9; color: #999; }

.view { flex: 1; min-width: 0; display: flex; flex-direction: column; }
.view-tabs { flex: none; height: 12px; display: flex; background: #cbcbcb; }
.view-tabs button { width: 72px; display: flex; align-items: center; gap: 4px; padding-left: 3px; }
.view-tabs .active { background: #fff; }
.view-tabs .end { margin-left: auto; }
.view-tabs .more { width: 10px; margin-left: auto; padding: 0; }
.stage { flex: 1; min-height: 0; display: flex; position: relative; }
.drawing { flex: 1; min-width: 0; width: auto; height: 100%; }
.thin { fill: none; stroke: #858585; stroke-width: .7; }
.level-text { font: 17px "Liberation Sans Narrow", "Liberation Sans", sans-serif; fill: #111; }
.walls { stroke: #665139; stroke-width: .7; }
.mid { fill: none; stroke: #4c3825; stroke-width: 1; }
.partition { fill: none; stroke: #34342f; stroke-width: 1.6; }
.rim { fill: none; stroke: #173f8c; stroke-width: 3; }
.edge { fill: none; stroke: #24509f; stroke-width: 1.4; }
.soft { stroke: #4b76bf; stroke-width: 1.2; }
.pointer { fill: #fff; stroke: #333; stroke-width: .6; }
.viewcube { fill: #f7f7f7; stroke: #ccc; stroke-width: .8; }
.viewcube .side { fill: #e8e8e8; stroke: #999; }
.viewcube .roof { fill: #f2f2f2; stroke: #999; }
.viewcube .tick { stroke: #aaa; stroke-width: 1.5; }
.viewcube text { font-size: 13px; fill: #b5b5b5; stroke: none; }
.viewcube .small { font-size: 7px; fill: #999; }
.navbar { position: absolute; right: 11px; top: 97px; width: 20px; height: 66px; background: #f4f4f4; border: 1px solid #bbb; border-radius: 3px; }
.navbar svg { width: 18px; height: 64px; fill: none; stroke: #aaa; }
.teal { stroke: #8fb9b7; }
.scroll-v { width: 10px; background: #f0f0f0; display: flex; flex-direction: column; align-items: center; justify-content: space-between; padding: 1px 0; }
.scroll-v svg { width: 8px; height: 8px; }
.knob { width: 9px; height: 9px; background: #c6c6c6; }
.view-bar { flex: none; height: 11px; display: flex; align-items: center; gap: 2px; padding: 0 5px 0 12px; background: linear-gradient(90deg, #fff, #f0f0f0 50%); }
.view-bar .scale { width: 32px; white-space: pre; word-break: keep-all; text-align: left; }
.track { flex: 1; display: flex; justify-content: center; }
.right { padding-right: 6px; }

.browser { width: 183px; background: #fff; border-left: 1px solid #c0c0c0; }
.tree { list-style: none; margin: 0; padding: 0 0 0 2px; height: 214px; display: grid; grid-auto-rows: 1fr; }
.tree li { display: flex; align-items: center; gap: 3px; white-space: nowrap; min-height: 0; }
.tree svg { width: 7px; height: 7px; }
.tree .ico { width: 10px; height: 10px; }
.tree .l1 { padding-left: 12px; gap: 5px; }
.tree .l2 { padding-left: 32px; }
.tree .leaf { padding-left: 10px; }
.sel { background: #dadada; }

/* status bar */
.status { flex: none; height: 12px; background: #cbcbcb; display: flex; align-items: center; }
.hint { flex: 1; padding-left: 1px; }
.sets { display: flex; align-items: center; gap: 4px; width: 308px; }
.sets .combo { appearance: none; flex: 1; height: 11px; background: #fff; padding-left: 3px; color: #777; }
.count { width: 16px; }
.picks { display: flex; align-items: center; gap: 4px; width: 142px; margin-left: 100px; }
.picks button { display: flex; align-items: center; }
.picks svg { width: 11px; height: 11px; }

/* floating input-method bar */
.ime { position: absolute; right: 5px; top: 436px; width: 100px; height: 18px; display: flex; align-items: center; justify-content: space-between; padding-right: 3px; color: #1467a8; fill: #1467a8; background: #fff; border: 1px solid #e4e4e4; }
.ime svg { width: 9px; height: 9px; }
.ime .sogou { width: 18px; height: 18px; }
.ime .zh { font-size: 9px; font-weight: 700; }
.ln { fill: none; stroke: #1467a8; stroke-width: 1.2; }
.orange { fill: #e8642d; }
.s { fill: none; stroke: #fff; stroke-width: 2; }
```
